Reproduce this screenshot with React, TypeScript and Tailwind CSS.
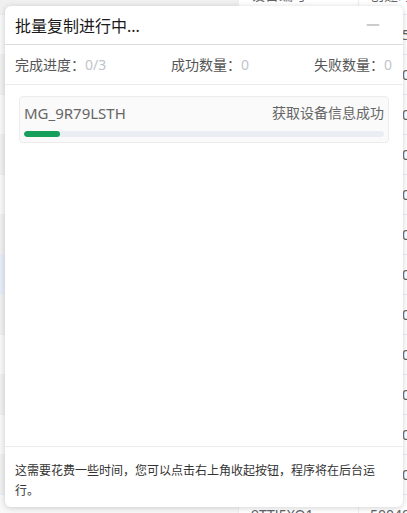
import { Minus } from "lucide-react";

type Row = {
  code: string;
  value: string;
};

const rows: Row[] = [
  { code: "设备编号", value: "创建时间信息" },
  { code: "K2H8QW1P", value: "12345101" },
  { code: "P3LA9Z7D", value: "50040313" },
  { code: "X8RT2M4N", value: "50040101" },
  { code: "B6VF0J2E", value: "50040101" },
  { code: "Q1ZC5K8W", value: "50040101" },
  { code: "M7HD3T9S", value: "50040212" },
  { code: "R2YG6P1L", value: "50040313" },
  { code: "T9KE4B7A", value: "50040313" },
  { code: "D5NW8C3U", value: "50040313" },
  { code: "F4QS1X6V", value: "50040101" },
  { code: "H0JM7R2Y", value: "50040515" },
  { code: "L3PU9E5K", value: "50040101" },
  { code: "9TTJ5XQ1", value: "50040101" },
];

export default function App() {
  const done = 0;
  const total = 3;
  const percent = 10;

  return (
    <div
      className="relative w-[407px] h-[513px] overflow-hidden bg-white text-[#333]"
      style={{ fontFamily: '"Noto Sans", "Noto Sans CJK SC", sans-serif' }}
    >
      {/* 背景のテーブル */}
      <div className="-mt-[25px]">
        {rows.map((row, i) => (
          <div
            key={i}
            className={`flex h-[40px] border-b border-[#ebeef5] text-[14px] text-[#606266] whitespace-nowrap ${
              i === 7 ? "bg-[#e6edf8]" : i % 2 === 0 ? "bg-[#f0f0f0]" : "bg-[#f8f8f8]"
            }`}
          >
            <div className="w-[239px] shrink-0 border-r border-[#ebeef5]" />
            <div className="w-[120px] shrink-0 flex items-center pl-[12px] border-r border-[#ebeef5] bg-white">
              {row.code}
            </div>
            <div className="flex-1 min-w-0 flex items-center pl-[11px] bg-white">{row.value}</div>
          </div>
        ))}
      </div>

      {/* 進捗ダイアログ */}
      <div className="absolute left-[5px] top-[6px] w-[398px] h-[501px] flex flex-col bg-white rounded-[6px] shadow-[0_1px_6px_rgba(0,0,0,0.18)]">
        <div className="h-[39px] flex items-center justify-between pl-[10px] pr-[20px] border-b border-[#dcdcdc] shrink-0">
          <span className="text-[16px] text-[#1a1a1a] pt-[2px]">批量复制进行中...</span>
          <Minus className="w-[20px] h-[20px] text-[#999]" strokeWidth={1.2} />
        </div>

        <div className="h-[40px] flex items-center justify-between pl-[10px] pr-[11px] border-b border-[#ebebeb] text-[14px] text-[#555] shrink-0">
          <span>
            完成进度：<span className="text-[#c0c4cc]">{done}/{total}</span>
          </span>
          <span>
            成功数量：<span className="text-[#c0c4cc]">0</span>
          </span>
          <span>
            失败数量：<span className="text-[#c0c4cc]">0</span>
          </span>
        </div>

        <div className="flex-1 px-[14px] pt-[11px]">
          <div className="h-[47px] rounded-[4px] border border-[#ececec] bg-[#fafafa] px-[4px] pt-[6px]">
            <div className="flex items-center justify-between text-[14px] text-[#666] leading-[20px]">
              <span className="text-[15px]">MG_9R79LSTH</span>
              <span>获取设备信息成功</span>
            </div>
            <div className="mt-[8px] h-[6px] rounded-full bg-[#eaeef4] overflow-hidden">
              <div className="h-full rounded-full bg-[#14a05b]" style={{ width: `${percent}%` }} />
            </div>
          </div>
        </div>

        <div className="border-t border-[#ebebeb] pt-[14px] pb-[6px] pl-[10px] pr-[14px] text-[12px] leading-[20px] text-[#333] shrink-0">
          这需要花费一些时间，您可以点击右上角收起按钮，程序将在后台运行。
        </div>
      </div>
    </div>
  );
}
